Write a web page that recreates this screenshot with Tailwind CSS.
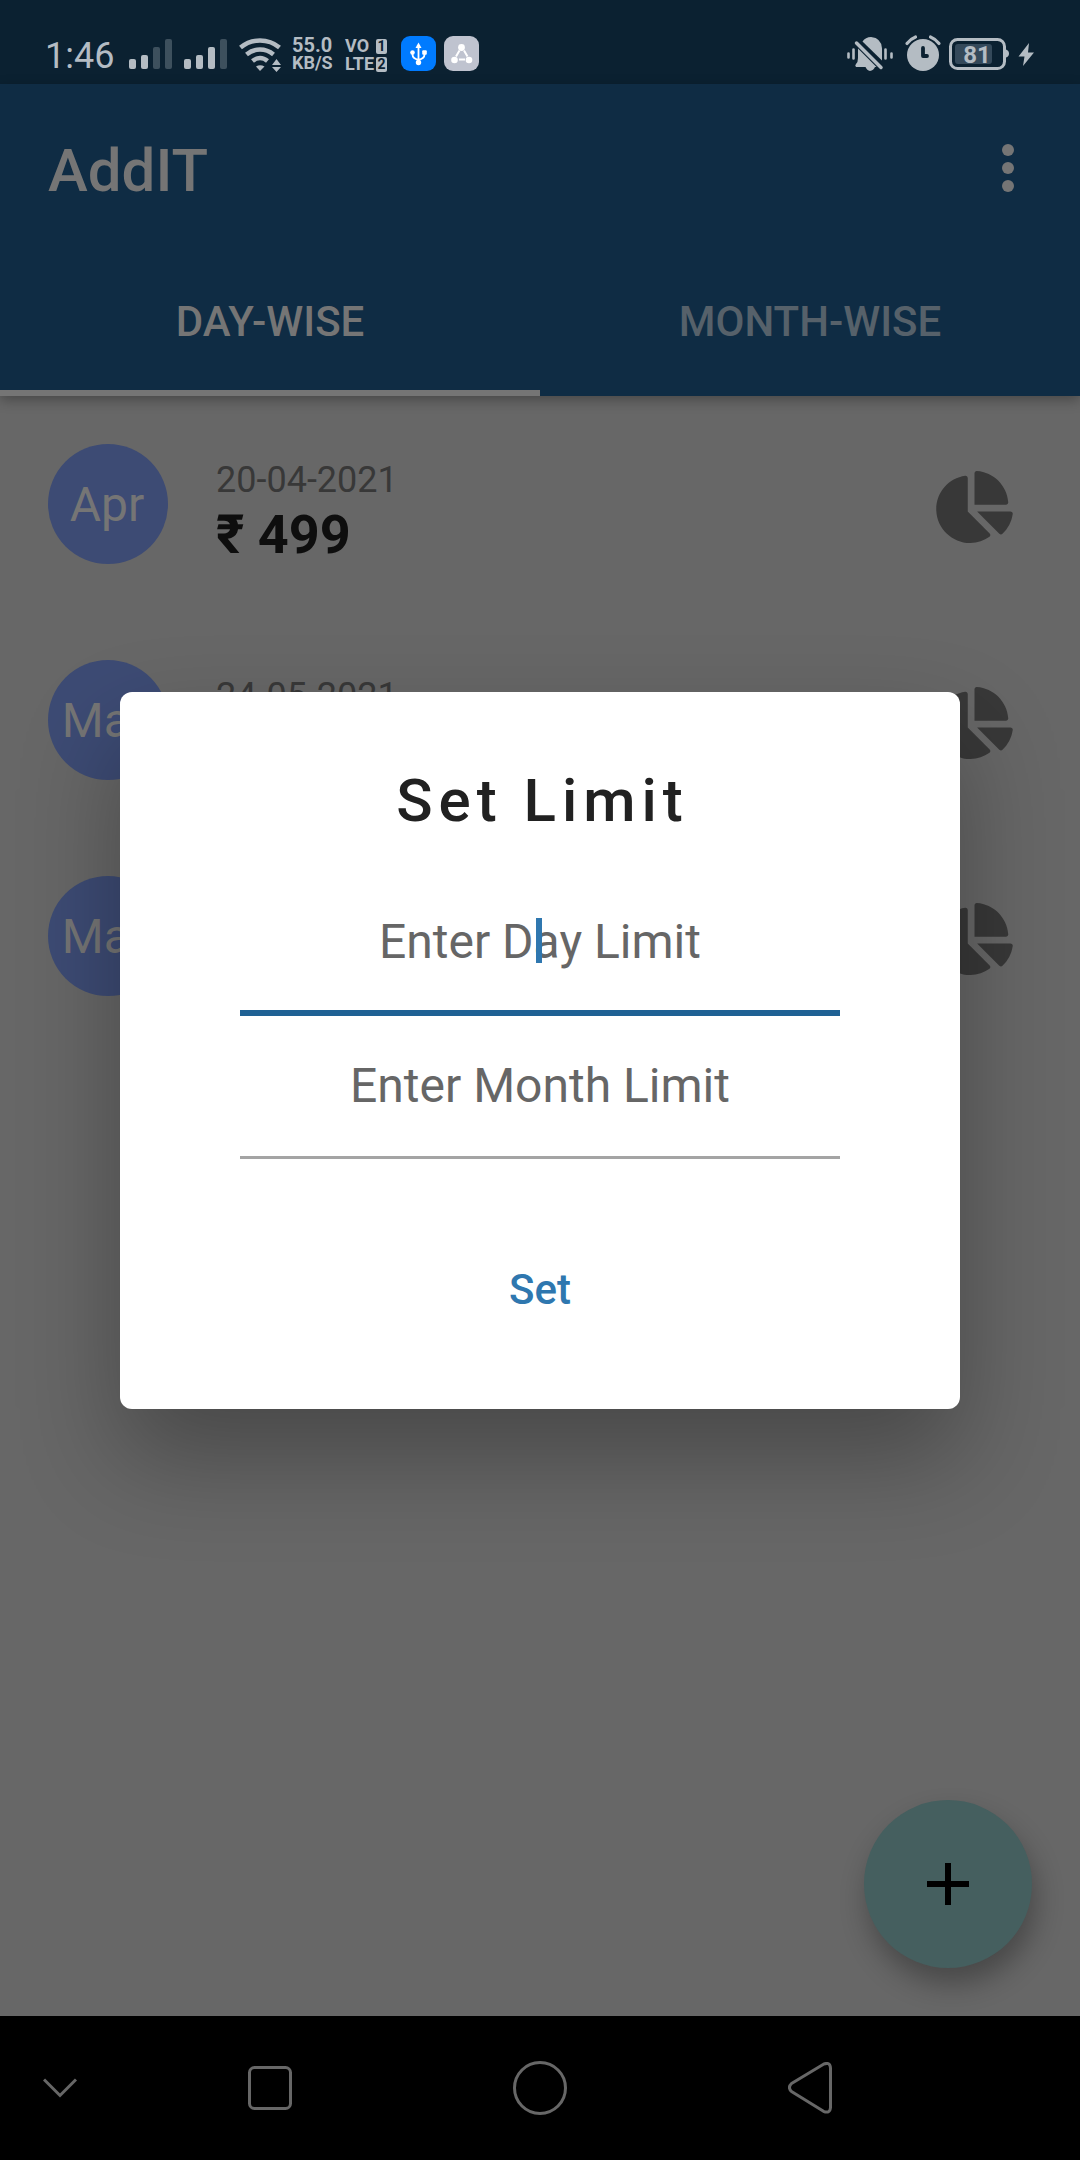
<!DOCTYPE html>
<html lang="en">
<head>
<meta charset="utf-8">
<meta name="viewport" content="width=device-width, initial-scale=1">
<title>AddIT</title>
<script src="https://cdn.jsdelivr.net/npm/@tailwindcss/browser@4"></script>
</head>
<body class="min-h-screen flex flex-col bg-[#676767] font-[Roboto,sans-serif]">

<!-- Shared icon -->
<svg class="hidden" aria-hidden="true">
  <symbol id="pie" viewBox="0 0 544 512">
    <path d="M527.79 288H290.5l158.03 158.03c6.04 6.04 15.98 6.53 22.19.68 38.7-36.46 65.32-85.61 73.13-140.86 1.34-9.46-6.51-17.85-16.06-17.85zm-15.83-64.8C503.72 103.74 408.26 8.28 288.8.04 279.68-.59 272 7.1 272 16.24V240h223.77c9.14 0 16.82-7.68 16.19-16.8zM224 288V50.71c0-9.55-8.39-17.4-17.84-16.06C86.99 51.49-4.1 155.6.14 280.37 4.5 408.51 114.83 513.59 243.03 511.98c50.4-.63 96.97-16.87 135.26-44.03 7.9-5.6 8.42-17.23 1.57-24.08L224 288z"/>
  </symbol>
</svg>

<!-- Status bar -->
<div class="h-[84px] bg-[#0b2131] text-[#b4bcc3] pt-9 pl-[45px] pr-[46px] flex items-start justify-between">
  <div class="flex items-start">
    <span class="text-[36px] leading-[40px] w-[84px]">1:46</span>
    <svg class="w-[43px] h-9" viewBox="0 0 43 36" fill="currentColor"><rect y="23" width="7" height="10" rx="2"/><rect x="12" y="19" width="7" height="14" rx="2"/><rect x="24" y="11" width="7" height="22" rx="2" opacity=".3"/><rect x="36" y="3" width="7" height="30" rx="2" opacity=".3"/></svg>
    <svg class="w-[43px] h-9 ml-3" viewBox="0 0 43 36" fill="currentColor"><rect y="23" width="7" height="10" rx="2"/><rect x="12" y="19" width="7" height="14" rx="2"/><rect x="24" y="11" width="7" height="22" rx="2"/><rect x="36" y="3" width="7" height="30" rx="2" opacity=".3"/></svg>
    <svg class="w-[42px] h-9 ml-3" viewBox="0 0 42 36" fill="none" stroke="currentColor" stroke-width="4.500"><path d="M1.500 11.500Q10 4.500 21 4.500T40.500 11.500M7.500 18.500Q13.500 13.500 21 13.500T34.500 18.500M13.500 25Q17 22 21 22T28.500 25"/><path d="M17 30.500Q21 28 25.500 30.500L21 35Z" fill="currentColor" stroke="none"/><path d="M33 29l4.500-6 4.500 6ZM33 31h9l-4.500 5Z" fill="currentColor" stroke="none"/></svg>
    <div class="ml-[11px] w-[53px] font-bold flex flex-col">
      <span class="text-[20px] leading-[18px]">55.0</span>
      <span class="text-[18px] leading-[18px]">KB/S</span>
    </div>
    <div class="pt-px w-[56px] font-bold text-[18px] leading-[18px] flex flex-col">
      <span class="flex justify-between pr-[14px]">VO<span class="mt-[2px] w-[11px] h-[15px] rounded-[2px] bg-[#b4bcc3] text-[#0b2131] text-[14px] leading-[15px] text-center">1</span></span>
      <span class="flex justify-between pr-[14px]">LTE<span class="mt-[2px] w-[11px] h-[15px] shrink-0 rounded-[2px] bg-[#b4bcc3] text-[#0b2131] text-[14px] leading-[15px] text-center">2</span></span>
    </div>
    <svg class="w-[35px] h-9" viewBox="0 0 35 36"><rect width="35" height="35" rx="9" fill="#007bff"/><g fill="none" stroke="#fff" stroke-width="1.800"><path d="M17.500 9v17M11.500 17v1.500q0 4 6 5.500M23.500 17v1.500q0 4-6 5.500"/></g><g fill="#fff"><path d="M17.500 6.500l3 5.500h-6z"/><circle cx="11.500" cy="16.500" r="2.300"/><rect x="21.200" y="14.200" width="4.600" height="4.600" rx="1"/><circle cx="17.500" cy="26.500" r="2.700"/></g></svg>
    <svg class="w-[35px] h-9 ml-2" viewBox="0 0 35 36"><rect width="35" height="35" rx="9" fill="#bfc3cf"/><g stroke="#fff" stroke-width="2"><path d="M15.500 14.500l-3.500 6M20 14.500l3.500 6M15 23.500h6"/></g><g fill="#fff"><circle cx="17.500" cy="11.500" r="3.400"/><circle cx="10.500" cy="24" r="3.300"/><circle cx="25" cy="24" r="3.300"/></g></svg>
  </div>
  <div class="flex items-start">
    <svg class="w-[47px] h-9" viewBox="0 0 47 36" fill="currentColor"><path d="M15.500 5.500Q18.500 1 24 1q10.500 1 11 11.500V24.500Z"/><path d="M11 12.500L29.500 31H28q-1.500 3.500-5 4-3-.5-4.500-4H9q-1.500-1.500 0-3 2-2 2-6Z"/><path d="M9.500 7L34 31.500" stroke="currentColor" stroke-width="3.500" stroke-linecap="round"/><path d="M1.500 17.500v4M6.500 13.500v9M38.500 13.500v9M44.500 17.500v4" stroke="currentColor" stroke-width="2.600" stroke-linecap="round"/></svg>
    <svg class="w-9 h-9 ml-[11px] overflow-visible" viewBox="0 0 36 36"><circle cx="18" cy="19" r="16" fill="currentColor"/><path d="M2 7.500Q5.500 3 10.500 1M34 7.500Q30.500 3 25.500 1" stroke="currentColor" stroke-width="3.200" fill="none" stroke-linecap="round"/><path d="M18 12v8h4" stroke="#0b2131" stroke-width="3.800" fill="none" stroke-linecap="round" stroke-linejoin="round"/></svg>
    <div class="relative ml-2 mt-[2px] w-[60px] h-8">
      <svg class="w-[60px] h-8" viewBox="0 0 60 32"><rect x="1.500" y="1.500" width="54" height="29" rx="7" fill="none" stroke="currentColor" stroke-width="3"/><rect x="6" y="6" width="37" height="20" rx="3" fill="#34495a"/><path d="M57 11.500q3 1 3 4t-3 4z" fill="currentColor"/></svg>
      <span class="absolute inset-0 pr-1 text-center text-[24px] leading-[34px] font-bold">81</span>
    </div>
    <svg class="w-4 h-9 ml-[9px]" viewBox="0 0 16 36" fill="currentColor"><path d="M11 7L.5 20.500h6L5 30 16 16.500H10Z"/></svg>
  </div>
</div>

<div class="relative flex-1 flex flex-col">
  <header class="bg-[#0f2c44] text-[#757575] shadow-[0_4px_12px_rgba(0,0,0,0.3)]">
    <div class="h-[168px] pl-12 pr-[48px] pt-[6px] flex items-center justify-between">
      <h1 class="text-[60px] leading-[72px] font-medium">AddIT</h1>
      <button type="button" aria-label="More options" class="w-12 h-[60px] flex items-end justify-center"><svg class="w-3 h-[57px]" viewBox="0 0 12 57" fill="currentColor"><circle cx="6" cy="6" r="6"/><circle cx="6" cy="24" r="6"/><circle cx="6" cy="42" r="6"/></svg></button>
    </div>
    <nav class="grid grid-cols-2 h-[144px] text-[42px] leading-[48px] font-medium text-center">
      <a href="#day" class="border-b-[6px] border-[#757575] pt-[46px]">DAY-WISE</a>
      <a href="#month" class="border-b-[6px] border-transparent pt-[46px] text-[#56616a]">MONTH-WISE</a>
    </nav>
  </header>

  <ul class="flex-1">
    <li class="flex items-start pl-12 pr-[67px] py-12">
      <div class="size-[120px] rounded-full bg-[#3d4b74] text-[#757575] text-[48px] leading-[122px] text-center pr-[2px]">Apr</div>
      <div class="ml-12 pt-3 flex-1">
        <p class="text-[36px] leading-[48px] text-[#383838]">20-04-2021</p>
        <p class="text-[54px] leading-[60px] pt-px font-bold text-[#0e0e0e]">₹ 499</p>
      </div>
      <svg class="w-[77px] h-[72px] mt-[27px] fill-[#383838]"><use href="#pie"/></svg>
    </li>
    <li class="flex items-start pl-12 pr-[67px] pt-[47px] pb-12">
      <div class="size-[120px] rounded-full bg-[#3d4b74] text-[#757575] text-[48px] leading-[122px] text-center pr-[2px]">May</div>
      <div class="ml-12 pt-3 flex-1">
        <p class="text-[36px] leading-[48px] text-[#383838]">24-05-2021</p>
      </div>
      <svg class="w-[77px] h-[72px] mt-[27px] fill-[#383838]"><use href="#pie"/></svg>
    </li>
    <li class="flex items-start pl-12 pr-[67px] py-12">
      <div class="size-[120px] rounded-full bg-[#3d4b74] text-[#757575] text-[48px] leading-[122px] text-center pr-[2px]">May</div>
      <div class="flex-1"></div>
      <svg class="w-[77px] h-[72px] mt-[27px] fill-[#383838]"><use href="#pie"/></svg>
    </li>
  </ul>

  <button type="button" aria-label="Add" class="absolute right-12 bottom-12 size-[168px] rounded-full bg-[#455f5f] flex items-center justify-center shadow-[4px_16px_28px_rgba(0,0,0,0.3)]">
    <svg class="size-[42px]" viewBox="0 0 42 42"><path d="M21 0v42M0 21h42" stroke="#000" stroke-width="6"/></svg>
  </button>

  <!-- Limit dialog -->
  <div class="absolute inset-0 px-[120px] flex items-center">
    <form role="dialog" aria-labelledby="dialog-title" class="w-full bg-white rounded-[12px] px-[120px] pt-[73px] pb-[47px] flex flex-col shadow-[0_48px_100px_rgba(0,0,0,0.3)]">
      <h2 id="dialog-title" class="text-[60px] leading-[72px] font-medium tracking-[6px] pl-[5px] text-center text-[#212121]">Set Limit</h2>
      <div class="relative mt-[76px]">
        <input type="text" aria-label="Day limit" placeholder="Enter Day Limit" class="block w-full h-[103px] pb-10 text-[48px] leading-[56px] text-center placeholder:text-[#666666] border-b-[6px] border-[#1f6194] outline-none caret-transparent">
        <span class="absolute left-1/2 top-[5px] -ml-1 w-[6px] h-[45px] bg-[#2f77af]"></span>
      </div>
      <input type="text" aria-label="Month limit" placeholder="Enter Month Limit" class="block w-full mt-10 h-[103px] pb-10 text-[48px] leading-[56px] text-center placeholder:text-[#666666] border-b-[3px] border-[#a4a4a4] outline-none">
      <button type="button" class="self-center mt-[59px] h-36 px-12 text-[42px] leading-[48px] font-medium text-[#2f77af]">Set</button>
    </form>
  </div>
</div>

<!-- System navigation -->
<nav class="h-36 bg-black grid grid-cols-[2fr_5fr_4fr_5fr_2fr]">
  <button type="button" aria-label="Hide navigation" class="flex items-center justify-center"><svg class="w-[34px] h-5" viewBox="0 0 34 20" fill="none" stroke="#676767" stroke-width="3"><path d="M1 1.500L17 17.500 33 1.500"/></svg></button>
  <button type="button" aria-label="Recent apps" class="flex items-center justify-center"><svg class="size-11" viewBox="0 0 44 44" fill="none" stroke="#676767" stroke-width="3"><rect x="1.500" y="1.500" width="41" height="41" rx="5"/></svg></button>
  <button type="button" aria-label="Home" class="flex items-center justify-center"><svg class="size-[54px]" viewBox="0 0 54 54" fill="none" stroke="#676767" stroke-width="3"><circle cx="27" cy="27" r="25.500"/></svg></button>
  <button type="button" aria-label="Back" class="flex items-center justify-center"><svg class="w-11 h-[52px]" viewBox="0 0 44 52" fill="none" stroke="#676767" stroke-width="3" stroke-linejoin="round"><path d="M35.500 2.200L3.500 21.500Q-.5 25.500 3.500 29.500L35.500 49.300Q42 52 42.500 45.500V6Q42-.5 35.500 2.200Z"/></svg></button>
</nav>
</body>
</html>
